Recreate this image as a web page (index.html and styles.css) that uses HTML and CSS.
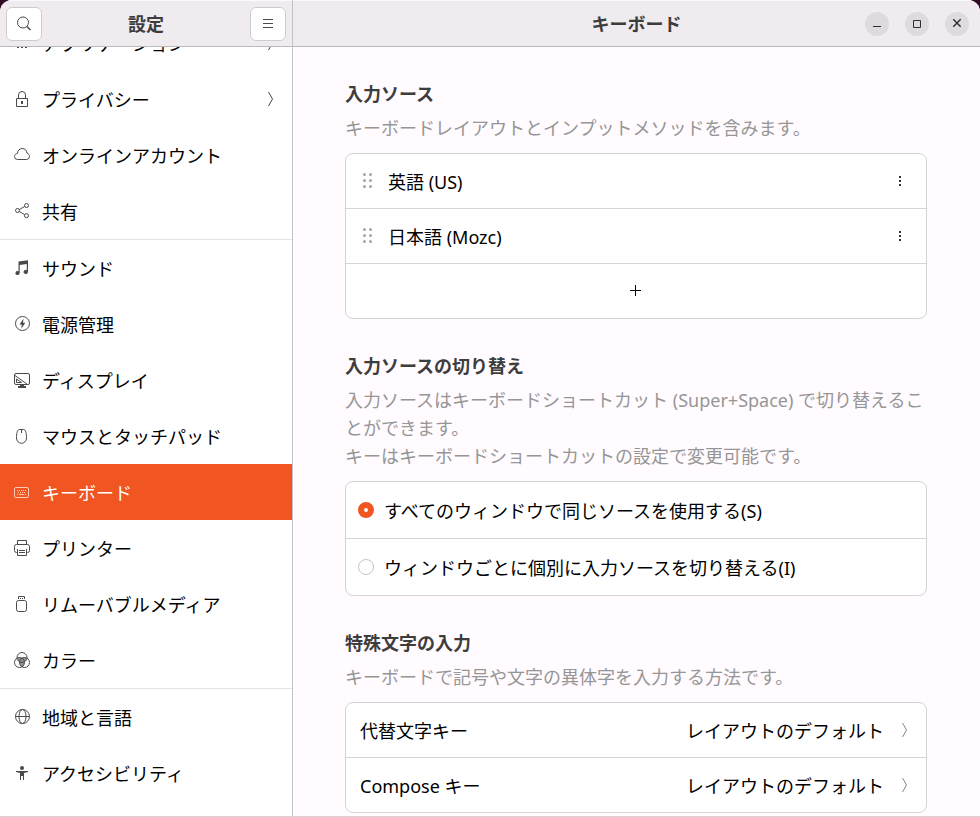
FILE: index.html
```
<!DOCTYPE html>
<html lang="ja">
  <head>
    <meta charset="UTF-8" />
    <meta name="viewport" content="width=device-width, initial-scale=1.0" />
    <title>設定 - キーボード</title>
    <link rel="stylesheet" href="styles.css">
  </head>
  <body>
    <div class="window">
      <!-- Sidebar -->
      <div class="sidebar">
        <header class="headerbar">
          <button class="header-button" aria-label="検索">
            <svg class="icon" viewBox="0 0 16 16"><circle cx="7" cy="6.500" r="5.500"/><path d="M11 10.500l3.500 3.500" stroke-width="1.500"/></svg>
          </button>
          <h1 class="title">設定</h1>
          <button class="header-button" aria-label="メニュー">
            <svg class="icon" viewBox="0 0 16 16"><path d="M3 3.500h10M3 7.500h10M3 11.500h10"/></svg>
          </button>
        </header>
        <nav class="panel-nav">
          <ul class="panel-list">
            <li>
              <a class="panel-link" href="#applications">
                <svg class="icon" viewBox="0 0 16 16"><path class="solid" d="M3 3h2v2H3zM7 3h2v2H7zM11 3h2v2h-2zM3 7h2v2H3zM7 7h2v2H7zM11 7h2v2h-2zM3 11h2v2H3zM7 11h2v2H7zM11 11h2v2h-2z"/></svg>
                <span class="panel-name">アプリケーション</span>
                <svg class="icon" viewBox="0 0 16 16"><path d="M6.500 1l4 7-4 7"/></svg>
              </a>
            </li>
            <li>
              <a class="panel-link" href="#privacy">
                <svg class="icon" viewBox="0 0 16 16"><path d="M2.500 7.500h11v8h-11zM4.500 7.500V4a3.500 3.500 0 0 1 7 0v3.500"/><path class="solid" d="M7 10h2v3H7z"/></svg>
                <span class="panel-name">プライバシー</span>
                <svg class="icon" viewBox="0 0 16 16"><path d="M6.500 1l4 7-4 7"/></svg>
              </a>
            </li>
            <li>
              <a class="panel-link" href="#online-accounts">
                <svg class="icon" viewBox="0 0 16 16"><path d="M3.500 12.500A3 3 0 0 1 .5 9.500c0-1.700 1.300-3 3-3A4.800 4.800 0 0 1 8.200 1.500c2.700 0 4.600 2 4.800 4.600 1.500.5 2.500 1.800 2.500 3.300a3 3 0 0 1-3 3.100z"/></svg>
                <span class="panel-name">オンラインアカウント</span>
              </a>
            </li>
            <li>
              <a class="panel-link" href="#sharing">
                <svg class="icon" viewBox="0 0 16 16"><circle cx="12.500" cy="2.500" r="2"/><circle cx="3.500" cy="7.500" r="2"/><circle cx="12.500" cy="12.700" r="2"/><path d="M5.300 6.500l5.400-3M5.300 8.500l5.400 3.200"/></svg>
                <span class="panel-name">共有</span>
              </a>
            </li>
            <li class="group-start">
              <a class="panel-link" href="#sound">
                <svg class="icon" viewBox="0 0 16 16"><path class="solid" d="M4.500 1.500L14 .3V12a2.200 2 0 1 1-1.200-1.800V4L5.700 5v8a2.100 1.900 0 1 1-1.200-1.700z"/></svg>
                <span class="panel-name">サウンド</span>
              </a>
            </li>
            <li>
              <a class="panel-link" href="#power">
                <svg class="icon" viewBox="0 0 16 16"><circle cx="8.500" cy="7.500" r="7"/><path class="solid" d="M9.500 2.500L5.500 8.500h2.300l-.5 4.200 4-6H9z"/></svg>
                <span class="panel-name">電源管理</span>
              </a>
            </li>
            <li>
              <a class="panel-link" href="#display">
                <svg class="icon" viewBox="0 0 16 16"><rect x=".5" y="1.500" width="15" height="11" rx="1.500"/><path d="M1 3.500l12.500 9M2.500 7v3.500h5z"/><path class="solid" d="M6 12.500h4V14h2v2H4v-2h2z"/></svg>
                <span class="panel-name">ディスプレイ</span>
              </a>
            </li>
            <li>
              <a class="panel-link" href="#mouse">
                <svg class="icon" viewBox="0 0 16 16"><path d="M5.500 1.500h4C12 1.500 12.500 6 12.500 10a5 5.300 0 0 1-10 0C2.500 6 3 1.500 5.500 1.500zM7.500 1.500V5"/></svg>
                <span class="panel-name">マウスとタッチパッド</span>
              </a>
            </li>
            <li>
              <a class="panel-link active" href="#keyboard" aria-current="page">
                <svg class="icon" viewBox="0 0 16 16"><rect x=".5" y="3.500" width="14" height="10" rx="1.500"/><path class="solid" d="M3 6h1v1H3zM5 6h1v1H5zM7 6h1v1H7zM9 6h1v1H9zM11 6h1v1h-1zM4 8h1v1H4zM6 8h1v1H6zM8 8h1v1H8zM10 8h1v1h-1zM3 10h1v1H3zM5 10h5v1H5zM11 10h1v1h-1z"/></svg>
                <span class="panel-name">キーボード</span>
              </a>
            </li>
            <li>
              <a class="panel-link" href="#printers">
                <svg class="icon" viewBox="0 0 16 16"><path d="M3.500 4V.500h9V4M3 12.500h-.5a2 2 0 0 1-2-2v-4a2 2 0 0 1 2-2h11a2 2 0 0 1 2 2v4a2 2 0 0 1-2 2H13M3.500 9v6.500h9V9M5 10.500h6M5 12.500h6"/></svg>
                <span class="panel-name">プリンター</span>
              </a>
            </li>
            <li>
              <a class="panel-link" href="#removable-media">
                <svg class="icon" viewBox="0 0 16 16"><rect x="2.500" y="4.500" width="10" height="11" rx="2"/><path d="M4.500 3V.500h6V3"/><path class="solid" d="M6 2h1v1H6zM8 2h1v1H8z"/></svg>
                <span class="panel-name">リムーバブルメディア</span>
              </a>
            </li>
            <li>
              <a class="panel-link" href="#color">
                <svg class="icon" viewBox="0 0 16 16"><circle cx="8" cy="5.500" r="5"/><circle cx="5.500" cy="10.500" r="5"/><circle cx="10.500" cy="10.500" r="5"/><path class="solid" d="M3.300 6.300a5 5 0 0 1 4.700-.2 5 5 0 0 1 4.700.2 5 5 0 0 1-2.200 3.800A5 5 0 0 1 8 14.500a5 5 0 0 1-2.500-4.400 5 5 0 0 1-2.200-3.800z" opacity=".6"/></svg>
                <span class="panel-name">カラー</span>
              </a>
            </li>
            <li class="group-start">
              <a class="panel-link" href="#region">
                <svg class="icon" viewBox="0 0 16 16"><circle cx="8.500" cy="7.500" r="7"/><ellipse cx="8.500" cy="7.500" rx="3.500" ry="7"/><path d="M1.500 7.500h14"/></svg>
                <span class="panel-name">地域と言語</span>
              </a>
            </li>
            <li>
              <a class="panel-link" href="#accessibility">
                <svg class="icon" viewBox="0 0 16 16"><circle class="solid" cx="8" cy="3" r="2"/><path class="solid" d="M2 6h12v1l-4 1v7H9v-4H7v4H6V8L2 7z"/></svg>
                <span class="panel-name">アクセシビリティ</span>
              </a>
            </li>
          </ul>
        </nav>
      </div>

      <!-- Keyboard panel -->
      <div class="main">
        <header class="headerbar main-header">
          <h1 class="title">キーボード</h1>
          <div class="window-controls">
            <button class="window-button" aria-label="最小化">
              <svg class="icon" viewBox="0 0 16 16"><path d="M4 10.500h8"/></svg>
            </button>
            <button class="window-button" aria-label="最大化">
              <svg class="icon" viewBox="0 0 16 16"><path d="M4.500 4.500h7v7h-7z"/></svg>
            </button>
            <button class="window-button" aria-label="閉じる">
              <svg class="icon" viewBox="0 0 16 16"><path d="M4.300 3.300l7.400 7.400M11.700 3.300l-7.400 7.400" stroke-width="1.400"/></svg>
            </button>
          </div>
        </header>
        <main class="content">
          <section class="group">
            <h2 class="group-title">入力ソース</h2>
            <p class="group-text">キーボードレイアウトとインプットメソッドを含みます。</p>
            <div class="card">
              <div class="row">
                <svg class="icon handle" viewBox="0 0 16 16"><path d="M4.500 1.500h0M10.500 1.500h0M4.500 7.500h0M10.500 7.500h0M4.500 13.500h0M10.500 13.500h0"/></svg>
                <span class="row-name">英語 (US)</span>
                <button class="more-button" aria-label="英語 (US) のメニュー">
                  <svg class="icon" viewBox="0 0 16 16"><path class="solid" d="M7 3h2v2H7zM7 7h2v2H7zM7 11h2v2H7z"/></svg>
                </button>
              </div>
              <div class="row">
                <svg class="icon handle" viewBox="0 0 16 16"><path d="M4.500 1.500h0M10.500 1.500h0M4.500 7.500h0M10.500 7.500h0M4.500 13.500h0M10.500 13.500h0"/></svg>
                <span class="row-name">日本語 (Mozc)</span>
                <button class="more-button" aria-label="日本語 (Mozc) のメニュー">
                  <svg class="icon" viewBox="0 0 16 16"><path class="solid" d="M7 3h2v2H7zM7 7h2v2H7zM7 11h2v2H7z"/></svg>
                </button>
              </div>
              <button class="row add-row" aria-label="入力ソースを追加">
                <svg class="icon" viewBox="0 0 16 16"><path d="M2 7.500h11M7.500 2v11"/></svg>
              </button>
            </div>
          </section>

          <section class="group">
            <h2 class="group-title">入力ソースの切り替え</h2>
            <p class="group-text">入力ソースはキーボードショートカット (Super+Space) で切り替えることができます。<br>キーはキーボードショートカットの設定で変更可能です。</p>
            <div class="card">
              <label class="row radio-row">
                <input class="radio" type="radio" name="source-mode" checked>
                <span class="row-name">すべてのウィンドウで同じソースを使用する(S)</span>
              </label>
              <label class="row radio-row">
                <input class="radio" type="radio" name="source-mode">
                <span class="row-name">ウィンドウごとに個別に入力ソースを切り替える(I)</span>
              </label>
            </div>
          </section>

          <section class="group">
            <h2 class="group-title">特殊文字の入力</h2>
            <p class="group-text">キーボードで記号や文字の異体字を入力する方法です。</p>
            <div class="card">
              <button class="row">
                <span class="row-name">代替文字キー</span>
                <span class="row-value">レイアウトのデフォルト</span>
                <svg class="icon chevron" viewBox="0 0 16 16"><path d="M6.500 1l4 7-4 7"/></svg>
              </button>
              <button class="row">
                <span class="row-name">Compose キー</span>
                <span class="row-value">レイアウトのデフォルト</span>
                <svg class="icon chevron" viewBox="0 0 16 16"><path d="M6.500 1l4 7-4 7"/></svg>
              </button>
            </div>
          </section>
        </main>
      </div>
    </div>
  </body>
</html>
```
FILE: styles.css
```
* {
  box-sizing: border-box;
}
body {
  margin: 0;
  height: 100vh;
  background: #300a24;
  color: #000;
  font-family: "Noto Sans", "Noto Sans CJK JP", sans-serif;
  font-size: 18px;
  line-height: 28px;
}
h1,
h2,
p,
ul {
  margin: 0;
  padding: 0;
}
button {
  font: inherit;
  color: inherit;
  padding: 0;
  border: none;
  background: none;
  cursor: pointer;
}
.window {
  display: flex;
  height: 100vh;
  border-bottom: 1px solid #d5d3d5;
  border-radius: 12px 12px 0 0;
  overflow: hidden;
}
.icon {
  display: block;
  flex: none;
  width: 16px;
  height: 16px;
  fill: none;
  stroke: #4a4a4a;
}
.icon .solid {
  fill: #4a4a4a;
  stroke: none;
}

/* header bars */
.headerbar {
  display: flex;
  flex: none;
  align-items: center;
  justify-content: space-between;
  height: 47px;
  padding: 0 6px;
  background: #efebef;
  border-top: 1px solid #fbfafb;
  border-bottom: 1px solid #bdbabd;
}
.title {
  font-size: 18px;
  font-weight: bold;
  color: #3d3d3d;
}
.header-button {
  display: flex;
  align-items: center;
  justify-content: center;
  width: 36px;
  height: 34px;
  background: #fff;
  border: 1px solid #cfcccf;
  border-radius: 6px;
}
.main-header {
  display: grid;
  grid-template-columns: 1fr auto 1fr;
  padding: 0 11px;
}
.main-header .title {
  grid-column: 2;
}
.window-controls {
  display: flex;
  gap: 16px;
  justify-content: flex-end;
}
.window-button {
  display: flex;
  align-items: center;
  justify-content: center;
  width: 24px;
  height: 24px;
  border-radius: 50%;
  background: #dedbde;
}
.window-button .icon {
  stroke: #2e2e2e;
}

/* sidebar */
.sidebar {
  display: flex;
  flex-direction: column;
  flex: none;
  width: 293px;
  background: #fff;
  border-right: 1px solid #c4c2c4;
}
.panel-nav {
  flex: 1;
  min-height: 0;
  overflow: hidden;
}
/* the list is scrolled down a little under the header */
.panel-list {
  margin-top: -32px;
  list-style: none;
}
.panel-link {
  display: flex;
  align-items: center;
  gap: 12px;
  height: 56px;
  padding: 0 14px;
  color: inherit;
  text-decoration: none;
}
.panel-name,
.row-name,
.row-value {
  padding-top: 2px;
}
.panel-name,
.row-name {
  flex: 1;
}
.group-start {
  border-top: 1px solid #e4e4e4;
}
.active {
  background: #f05522;
  color: #fff;
}
.active .icon {
  stroke: #ffc9b5;
}
.active .icon .solid {
  fill: #ffc9b5;
}

/* content */
.main {
  display: flex;
  flex-direction: column;
  flex: 1;
  min-width: 0;
  background: #fffbff;
}
.content {
  flex: 1;
  min-height: 0;
  padding: 0 53px 0 52px;
  overflow: hidden;
}
.group {
  margin-top: 33px;
}
.group-title {
  margin-bottom: 6px;
  font-size: 18px;
  font-weight: bold;
  color: #3d3d3d;
}
.group-text {
  margin-bottom: 11px;
  color: #969696;
}
.card {
  background: #fff;
  border: 1px solid #d6d4d6;
  border-radius: 8px;
  overflow: hidden;
}
.row {
  display: flex;
  align-items: center;
  gap: 12px;
  width: 100%;
  height: 54px;
  padding: 0 14px;
  text-align: left;
}
.row + .row {
  height: 55px;
  border-top: 1px solid #d6d4d6;
}
.handle {
  stroke: #a6a6a6;
  stroke-width: 3;
  stroke-linecap: round;
}
.more-button {
  display: flex;
  align-items: center;
  justify-content: center;
  width: 24px;
  height: 32px;
}
.more-button .solid {
  fill: #333;
}
.add-row {
  justify-content: center;
}
.add-row .icon {
  stroke: #000;
}
.chevron {
  stroke: #858585;
}
.radio-row {
  height: 56px;
  gap: 10px;
  padding: 0 12px;
}
.radio-row + .radio-row {
  height: 57px;
}
.radio {
  flex: none;
  appearance: none;
  width: 16px;
  height: 16px;
  margin: 0;
  border: 1px solid #c6c4c6;
  border-radius: 50%;
  background: #fff;
}
.radio:checked {
  border: 6px solid #f05522;
}
```
